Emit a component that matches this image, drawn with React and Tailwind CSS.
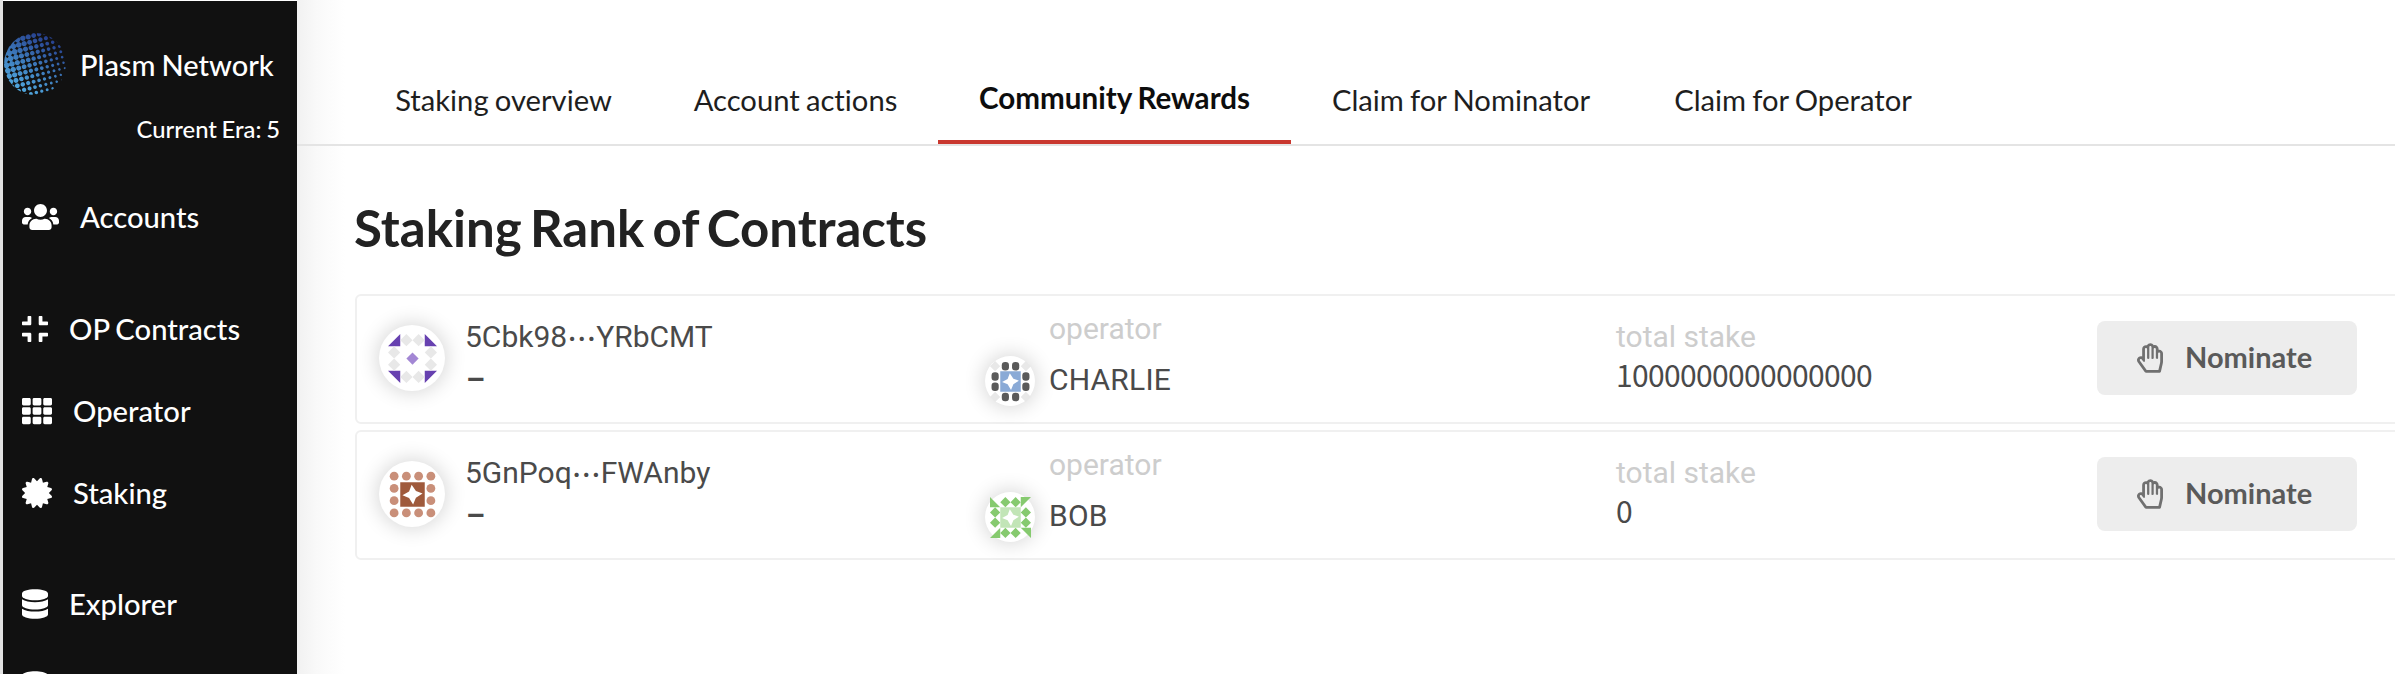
import React from 'react';
import { FaUsers, FaCompress, FaTh, FaCertificate, FaDatabase, FaRegHandPaper } from 'react-icons/fa';

// Halftone globe: dots on a tilted grid, shrinking towards the lower right.
const LOGO_DOTS = (() => {
  const dots = [];
  const pitch = 5.6;
  for (let i = -6; i <= 6; i++) {
    for (let j = -6; j <= 6; j++) {
      const x = 31 + i * pitch;
      const y = 31 + j * pitch;
      if (Math.hypot(x - 31, y - 31) > 33) continue;
      const t = (x * 0.8 + y * 0.5 - 6) / 70;
      dots.push({ x, y, size: Math.max(1.5, 6.3 - t * 4.6) });
    }
  }
  return dots;
})();

function Logo() {
  return (
    <svg width="62" height="62" viewBox="0 0 62 62" className="shrink-0">
      <defs>
        <linearGradient id="sea" gradientUnits="userSpaceOnUse" x1="6" y1="52" x2="46" y2="6">
          <stop offset="0" stopColor="#52abe0" />
          <stop offset="0.5" stopColor="#3d7abb" />
          <stop offset="1" stopColor="#27418f" />
        </linearGradient>
        <clipPath id="globe">
          <circle cx="31" cy="31" r="31" />
        </clipPath>
      </defs>
      <g clipPath="url(#globe)">
        <g transform="rotate(-14 31 31)">
          <path
            fill="url(#sea)"
            d={LOGO_DOTS.map(({ x, y, size }) => {
              const h = size / 2;
              const k = h * 0.4;
              return `M${x - h} ${y - k}L${x - k} ${y - h}H${x + k}L${x + h} ${y - k}V${y + k}L${x + k} ${y + h}H${x - k}L${x - h} ${y + k}z`;
            }).join('')}
          />
        </g>
      </g>
    </svg>
  );
}

const diamond = (c, r) => `M${c * 10 + 5} ${r * 10}l5 5l-5 5l-5-5z`;
const EDGES = [[1, 0], [2, 0], [0, 1], [3, 1], [0, 2], [3, 2], [1, 3], [2, 3]];
const CORNERS = [[0, 0], [3, 0], [0, 3], [3, 3]];
const STAR = 'M19.3 12L22.8 17.2L28.2 19.2L22.8 22.6L20.5 28.2L17.2 22.8L11.8 20.6L17.2 17.6z';

function Identicon({ kind }) {
  if (kind === 'violet') {
    return (
      <svg viewBox="0 0 40 40" className="size-full overflow-visible">
        <path fill="#6741b0" d="M10 0V10H0zM30 0V10H40zM0 30H10V40zM30 30H40L30 40z" />
        <path fill="#e8e8e8" d={EDGES.map(([c, r]) => diamond(c, r)).join('')} />
        <path fill="#a387d4" d="M20 15l5 5l-5 5l-5-5z" />
      </svg>
    );
  }
  if (kind === 'brown') {
    return (
      <svg viewBox="0 0 40 40" className="size-full overflow-visible">
        {[...EDGES, ...CORNERS].map(([c, r]) => (
          <circle key={`${c}${r}`} cx={c * 10 + 5} cy={r * 10 + 5} r="3.6" fill="#c98f79" />
        ))}
        <path fill="#9f5a3c" d="M10 10h20v20H10z" />
        <path fill="#fff" d={STAR} />
      </svg>
    );
  }
  if (kind === 'blue') {
    return (
      <svg viewBox="0 0 40 40" className="size-full overflow-visible">
        <path fill="#e8e8e8" d={CORNERS.map(([c, r]) => diamond(c, r)).join('')} />
        {EDGES.map(([c, r]) => (
          <rect key={`${c}${r}`} x={c * 10 + 1.5} y={r * 10 + 0.9} width="7" height="8.4" rx="3.2" fill="#5a5a5a" />
        ))}
        <path fill="#8aaad6" d="M10 10h20v20H10z" />
        <path fill="#fff" d={STAR} />
      </svg>
    );
  }
  return (
    <svg viewBox="0 0 40 40" className="size-full overflow-visible">
      <path fill="#86ca6f" d="M0 0V10H10zM30 0H40L30 10zM30 30H40V40zM0 40L10 30V40z" />
      <path fill="#86ca6f" d={EDGES.map(([c, r]) => diamond(c, r)).join('')} />
      <path fill="#c2e5b7" d="M10 10h20v20H10z" />
      <path fill="#fff" d={STAR} />
    </svg>
  );
}

const MENU = [
  { id: 'accounts', label: 'Accounts', icon: FaUsers, cls: 'w-[37px]', row: 'mb-[29px]' },
  { id: 'contracts', label: 'OP Contracts', icon: FaCompress, cls: 'w-[26px]', row: '' },
  { id: 'operator', label: 'Operator', icon: FaTh, cls: 'w-[30px]', row: '' },
  { id: 'staking', label: 'Staking', icon: FaCertificate, cls: 'w-[30px]', row: 'mb-[28px]' },
  { id: 'explorer', label: 'Explorer', icon: FaDatabase, cls: 'w-[26px]', row: '' },
  { id: 'next', icon: FaDatabase, cls: 'w-[26px]', row: '' },
];

function Sidebar() {
  return (
    <aside className="mt-px ml-[3px] h-[673px] w-[294px] shrink-0 overflow-hidden bg-[#111] font-medium text-white">
      <div className="mt-8 ml-px flex h-[62px] items-center">
        <Logo />
        <span className="mt-[2px] ml-[14px] text-[29px] leading-[40px] whitespace-nowrap">Plasm Network</span>
      </div>
      <div className="mt-[18px] pr-[17px] text-right text-[23.8px] leading-[32px]">Current Era: 5</div>
      <nav className="mt-[31px]">
        {MENU.map(({ id, label, icon: Icon, cls, row }) => (
          <a key={id} className={`flex h-[82.4px] items-center pl-[19px] ${row}`}>
            <Icon className={`h-[30px] shrink-0 ${cls}`} />
            {label && <span className="ml-[21px] text-[29.2px] leading-[40px] whitespace-nowrap">{label}</span>}
          </a>
        ))}
      </nav>
    </aside>
  );
}

const TABS = [
  { label: 'Staking overview', cls: 'w-[299px]' },
  { label: 'Account actions', cls: 'w-[285px]' },
  { label: 'Community Rewards', cls: 'w-[353px]', active: true },
  { label: 'Claim for Nominator', cls: 'w-[340px]' },
  { label: 'Claim for Operator', cls: 'w-[324px]' },
];

function Tabs() {
  return (
    <nav className="flex h-[146px] items-end border-b-2 border-[#e4e4e4] pl-[57px] leading-[40px]">
      {TABS.map(({ label, cls, active }) =>
        active ? (
          <div key={label} className={`flex h-[66px] shrink-0 justify-center border-b-4 border-[#c9382f] text-[29.6px] font-bold whitespace-nowrap text-[#0d0d0d] ${cls}`}>
            {label}
          </div>
        ) : (
          <div key={label} className={`flex h-[64px] shrink-0 justify-center text-[29.2px] whitespace-nowrap text-[#1e1e1e] ${cls}`}>
            {label}
          </div>
        )
      )}
    </nav>
  );
}

const CONTRACTS = [
  { head: '5Cbk98', tail: 'YRbCMT', icon: 'violet', operator: 'CHARLIE', opIcon: 'blue', stake: '1000000000000000' },
  { head: '5GnPoq', tail: 'FWAnby', icon: 'brown', operator: 'BOB', opIcon: 'green', stake: '0' },
];

function ContractRow({ c }) {
  return (
    <div className="flex h-[130px] w-[2080px] rounded-[6px] border-2 border-[#f0f0f0] bg-white font-['Roboto','Noto_Sans_CJK_TC',sans-serif] text-[30px] leading-[38px] text-[#4a4a4a] [word-spacing:0]">
      <div className="mt-[29px] ml-[22px] size-[66px] shrink-0 rounded-full bg-white p-[8.5px] shadow-[0_0_20px_2px_rgba(0,0,0,0.16)]">
        <Identicon kind={c.icon} />
      </div>
      <div className="ml-[20px] w-[520px] shrink-0 pt-[22px]">
        <div className="flex whitespace-nowrap">
          <span>{c.head}</span>
          <span className="font-['Noto_Sans_CJK_TC'] text-[29px] font-medium">…</span>
          <span>{c.tail}</span>
        </div>
        <div className="mt-[5px] ml-px font-bold">–</div>
      </div>
      <div className="flex w-[631px] shrink-0">
        <div className="mt-[60px] size-[50px] shrink-0 rounded-full bg-white p-[4.5px] shadow-[0_0_20px_2px_rgba(0,0,0,0.16)]">
          <Identicon kind={c.opIcon} />
        </div>
        <div className="ml-[14px] pt-[14px]">
          <div className="text-[#cdcdcd]">operator</div>
          <div className="mt-[13px] tracking-[0.2px]">{c.operator}</div>
        </div>
      </div>
      <div className="w-[481px] shrink-0 pt-[22px]">
        <div className="text-[#cdcdcd]">total stake</div>
        <div className="-mt-[1px] font-['Noto_Sans_CJK_JP'] tracking-[-0.65px]">{c.stake}</div>
      </div>
      <button className="mt-[25px] flex h-[74px] w-[260px] shrink-0 items-center rounded-lg bg-[#ededed] pl-[40px] font-[Lato] text-[29px] font-bold text-[#5a5a5a]">
        <FaRegHandPaper className="h-[30px] w-[26px] text-[#707070]" />
        <span className="-mt-[2px] ml-[22px]">Nominate</span>
      </button>
    </div>
  );
}

export default function App() {
  return (
    <div className="flex h-[674px] w-[2395px] overflow-hidden bg-[linear-gradient(to_right,#e2e2e2_3px,#fff_3px)] font-[Lato,sans-serif] [font-variant-ligatures:none] [word-spacing:-0.08em]">
      <Sidebar />
      <main className="h-full min-w-0 flex-1 overflow-hidden bg-[linear-gradient(to_right,#f1f1f1,#f9f9f9_20px,#fff_48px)]">
        <Tabs />
        <h1 className="mt-[50px] ml-[57px] text-[51px] leading-[64px] font-bold text-[#222] [word-spacing:-0.08em]">Staking Rank of Contracts</h1>
        <div className="mt-[34px] ml-[58px] flex flex-col gap-[6px]">
          {CONTRACTS.map((c) => (
            <ContractRow key={c.head} c={c} />
          ))}
        </div>
      </main>
    </div>
  );
}
